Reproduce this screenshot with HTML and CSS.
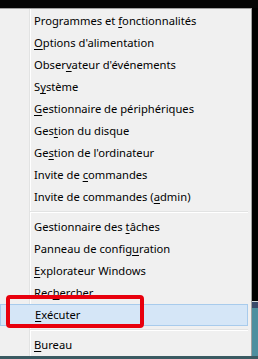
FILE: index.html
```html
<!DOCTYPE html>
<html lang="fr">
<head>
  <meta charset="UTF-8">
  <title>Menu Windows + X</title>
  <link rel="stylesheet" href="styles.css">
</head>
<body>
  <div class="screen">
    <div class="topbar"></div>
    <div class="main">
      <div class="menu">
        <div class="item">Programmes et <u>f</u>onctionnalités</div>
        <div class="item"><u>O</u>ptions d'alimentation</div>
        <div class="item">Obser<u>v</u>ateur d'événements</div>
        <div class="item">S<u>y</u>stème</div>
        <div class="item"><u>G</u>estionnaire de périphériques</div>
        <div class="item">Ges<u>t</u>ion du disque</div>
        <div class="item">Ge<u>s</u>tion de l'ordinateur</div>
        <div class="item">Invite de <u>c</u>ommandes</div>
        <div class="item">Invite de commandes (<u>a</u>dmin)</div>
        <div class="sep"></div>
        <div class="item">Gestionnaire des <u>t</u>âches</div>
        <div class="item">Panneau de config<u>u</u>ration</div>
        <div class="item"><u>E</u>xplorateur Windows</div>
        <div class="item">Rec<u>h</u>ercher</div>
        <div class="item active"><u>E</u>xécuter</div>
        <div class="sep"></div>
        <div class="item"><u>B</u>ureau</div>
        <!-- red annotation drawn over the menu -->
        <div class="mark"></div>
      </div>
      <div class="side">
        <div class="side-dark"></div>
        <div class="side-edge"></div>
        <div class="side-dots"></div>
        <div class="side-desk"></div>
      </div>
    </div>
    <div class="bottombar"></div>
  </div>
</body>
</html>
```

FILE: styles.css
```css
body { margin: 0; background-color: #000; font-family: "Noto Sans", Arial, sans-serif; }
.screen {
  width: 258px;
  height: 359px;
  overflow: hidden;
  display: flex;
  flex-direction: column;
}
.topbar { height: 9px; background-color: #050505; }
.main { display: flex; flex: 1; }
.menu {
  position: relative;
  width: 251px;
  padding: 1px 0 0 0;
  border-top: 1px solid #a0a0a0;
  border-right: 1px solid #a0a0a0;
  background: linear-gradient(to right, #f0f0f0 29px, #e2e3e3 29px, #e2e3e3 30px, #ffffff 30px, #ffffff 31px, #f0f0f0 31px);
}
.item {
  height: 22px;
  line-height: 22px;
  padding-left: 34px;
  font-size: 11.2px;
  color: #000;
  white-space: nowrap;
}
.item u { text-underline-offset: 2px; }
.item.active {
  height: 20px;
  line-height: 20px;
  margin-right: 3px;
  border: 1px solid #a8cbec;
  background-color: #d5e6f7;
}
.sep {
  margin: 3px 3px 3px 30px;
  height: 0;
  border-top: 1px solid #e2e3e3;
  border-bottom: 1px solid #ffffff;
}
.mark {
  position: absolute;
  left: 6px;
  top: 286px;
  width: 130px;
  height: 25px;
  border: 4px solid #e8000d;
  border-radius: 4px;
}
.side { width: 6px; display: flex; flex-direction: column; }
.side-dark { height: 293px; background-color: #000; }
.side-edge { height: 1px; background-color: #cfd6da; }
.side-dots { height: 6px; background-color: #3a4a6a; }
.side-desk { flex: 1; background-color: #4d8f9f; }
.bottombar { height: 3px; background-color: #3a5a62; }
```
